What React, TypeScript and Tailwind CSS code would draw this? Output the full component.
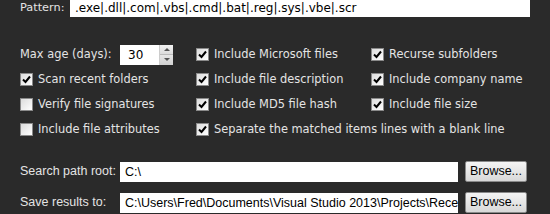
import React from "react";

const tahoma = "font-['DejaVu_Sans',Verdana,sans-serif]";
const arial = "font-['Liberation_Sans',Arial,sans-serif]";

function Check({ checked, label }: { checked: boolean; label: string }) {
  return (
    <label className="flex items-center gap-[5px] h-[25px]">
      <span className="w-[13px] h-[13px] bg-gradient-to-br from-[#dcdcdc] to-white border border-[#8a8a8a] flex items-center justify-center">
        {checked && (
          <svg width="9" height="9" viewBox="0 0 9 9">
            <path d="M1 4.5 L3.5 7 L8 1.5" stroke="#000" strokeWidth="2" fill="none" />
          </svg>
        )}
      </span>
      <span className="text-[11.4px] text-[#e4e4e4] whitespace-nowrap">{label}</span>
    </label>
  );
}

function BrowseButton() {
  return (
    <button className="ml-[7px] w-[62px] h-[21px] rounded-[2px] bg-gradient-to-b from-[#f4f4f4] to-[#d8d8d8] border border-[#8a8a8a] text-[12.5px] text-black">
      Browse...
    </button>
  );
}

export default function App() {
  return (
    <div className={`w-[550px] h-[214px] bg-[#2a2a2a] pl-[20px] overflow-hidden ${tahoma}`}>
      {/* pattern */}
      <div className="flex items-center h-[17px]">
        <span className="w-[50px] text-[11.3px] text-[#e4e4e4]">Pattern:</span>
        <div className="w-[460px] h-[17px] bg-white pl-[5px] text-[12px] text-black leading-[16px]">
          .exe|.dll|.com|.vbs|.cmd|.bat|.reg|.sys|.vbe|.scr
        </div>
      </div>

      {/* options */}
      <div className="grid grid-cols-[176px_175px_auto] mt-[25px]">
        <div className="flex items-center h-[25px]">
          <span className="w-[100px] text-[11.4px] text-[#e4e4e4]">Max age (days):</span>
          <div className="flex h-[20px] w-[53px] bg-white">
            <span className="flex-1 pl-[8px] text-[12px] leading-[20px] text-black">30</span>
            <div className="w-[14px] flex flex-col border-l border-[#ccc]">
              <div className="flex-1 bg-gradient-to-b from-[#f2f2f2] to-[#dcdcdc] border-b border-[#bbb] flex items-center justify-center">
                <svg width="6" height="3" viewBox="0 0 6 3"><path d="M0 3 L3 0 L6 3Z" fill="#555" /></svg>
              </div>
              <div className="flex-1 bg-gradient-to-b from-[#e6e6e6] to-[#d2d2d2] flex items-center justify-center">
                <svg width="6" height="3" viewBox="0 0 6 3"><path d="M0 0 L3 3 L6 0Z" fill="#555" /></svg>
              </div>
            </div>
          </div>
        </div>
        <Check checked label="Include Microsoft files" />
        <Check checked label="Recurse subfolders" />
        <Check checked label="Scan recent folders" />
        <Check checked label="Include file description" />
        <Check checked label="Include company name" />
        <Check checked={false} label="Verify file signatures" />
        <Check checked label="Include MD5 file hash" />
        <Check checked label="Include file size" />
        <Check checked={false} label="Include file attributes" />
        <div className="col-span-2">
          <Check checked label="Separate the matched items lines with a blank line" />
        </div>
      </div>

      {/* paths */}
      <div className={`mt-[19px] flex flex-col gap-[10px] ${arial}`}>
        <div className="flex items-center h-[21px]">
          <span className="w-[100px] text-[12.5px] text-[#e4e4e4] whitespace-nowrap">Search path root:</span>
          <div className="w-[338px] h-[20px] bg-white pl-[5px] text-[12.5px] leading-[20px] text-black">C:\</div>
          <BrowseButton />
        </div>
        <div className="flex items-center h-[21px]">
          <span className="w-[100px] text-[12.5px] text-[#e4e4e4] whitespace-nowrap">Save results to:</span>
          <div className="w-[338px] h-[20px] bg-white pl-[5px] text-[12.5px] leading-[20px] text-black overflow-hidden whitespace-nowrap">
            C:\Users\Fred\Documents\Visual Studio 2013\Projects\RecentFiles
          </div>
          <BrowseButton />
        </div>
      </div>
    </div>
  );
}
